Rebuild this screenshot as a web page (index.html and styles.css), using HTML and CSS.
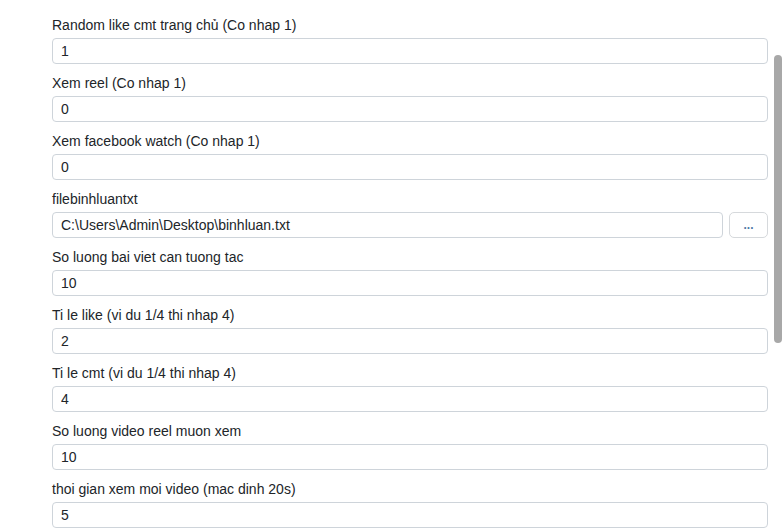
FILE: index.html
```html
<!DOCTYPE html>
<html lang="vi">
<head>
  <meta charset="UTF-8">
  <title>Cau hinh</title>
  <link rel="stylesheet" href="styles.css">
</head>
<body>
  <div class="settings">
    <div class="field">
      <label class="field-label">Random like cmt trang chủ (Co nhap 1)</label>
      <input class="field-input" type="text" value="1">
    </div>
    <div class="field">
      <label class="field-label">Xem reel (Co nhap 1)</label>
      <input class="field-input" type="text" value="0">
    </div>
    <div class="field">
      <label class="field-label">Xem facebook watch (Co nhap 1)</label>
      <input class="field-input" type="text" value="0">
    </div>
    <div class="field">
      <label class="field-label">filebinhluantxt</label>
      <div class="file-row">
        <input class="field-input" type="text" value="C:\Users\Admin\Desktop\binhluan.txt">
        <button class="browse-btn" type="button">...</button>
      </div>
    </div>
    <div class="field">
      <label class="field-label">So luong bai viet can tuong tac</label>
      <input class="field-input" type="text" value="10">
    </div>
    <div class="field">
      <label class="field-label">Ti le like (vi du 1/4 thi nhap 4)</label>
      <input class="field-input" type="text" value="2">
    </div>
    <div class="field">
      <label class="field-label">Ti le cmt (vi du 1/4 thi nhap 4)</label>
      <input class="field-input" type="text" value="4">
    </div>
    <div class="field">
      <label class="field-label">So luong video reel muon xem</label>
      <input class="field-input" type="text" value="10">
    </div>
    <div class="field">
      <label class="field-label">thoi gian xem moi video (mac dinh 20s)</label>
      <input class="field-input" type="text" value="5">
    </div>
  </div>
  <!-- thanh cuon -->
  <div class="scroll-thumb"></div>
</body>
</html>
```

FILE: styles.css
```css
html, body {
  height: 100%;
}
body {
  margin: 0;
  background: #fff;
  font-family: 'Liberation Sans', Arial, sans-serif;
  font-size: 14px;
  color: #212529;
  overflow: hidden;
}
.settings {
  padding: 18px 14px 0 52px;
  display: flex;
  flex-direction: column;
  gap: 12px;
}
.field {
  display: flex;
  flex-direction: column;
  gap: 5px;
}
.field-label {
  line-height: 15px;
}
.field-input {
  box-sizing: border-box;
  width: 100%;
  height: 26px;
  border: 1px solid #ced4da;
  border-radius: 4px;
  padding: 0 8px;
  font-family: inherit;
  font-size: 14px;
  color: #212529;
  background: #fff;
  outline: none;
}
.file-row {
  display: flex;
  gap: 6px;
}
.file-row .field-input {
  flex: 1;
}
.browse-btn {
  width: 39px;
  height: 26px;
  flex: none;
  border: 1px solid #d6d9dc;
  border-radius: 5px;
  background: #fff;
  color: #4f7aa6;
  font-family: inherit;
  font-size: 12px;
  font-weight: 700;
  padding: 0;
  cursor: pointer;
}
.scroll-thumb {
  position: fixed;
  right: 0;
  top: 55px;
  width: 8px;
  height: 288px;
  border-radius: 4px;
  background: #a8a8a8;
}
```
